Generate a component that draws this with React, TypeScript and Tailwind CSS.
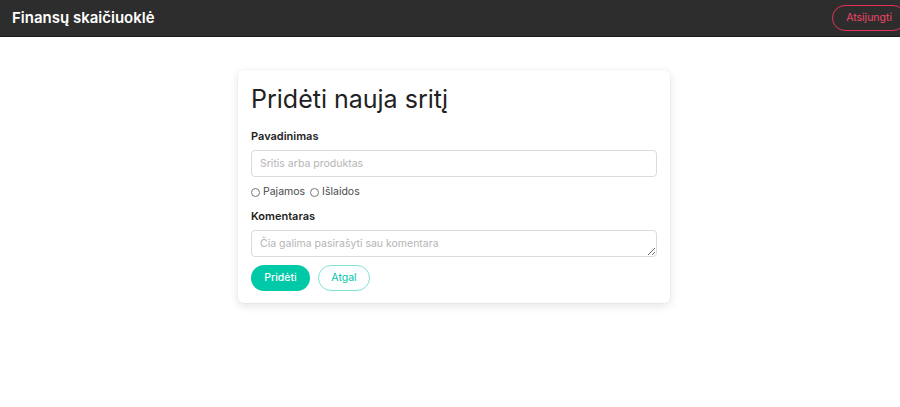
import React from "react";

export default function App() {
  return (
    <div className="min-h-[407px] w-full overflow-hidden bg-white" style={{ fontFamily: "Inter, 'Noto Sans', sans-serif" }}>
      <nav className="flex h-[37px] items-center overflow-hidden border-b border-[#1c1c1c] bg-[#2d2d2d] pl-[12px]">
        <div className="text-[15px] font-semibold text-white">Finansų skaičiuoklė</div>
        <div className="ml-auto flex -mr-[6px]">
          <button className="h-[26px] rounded-full border border-[#e8315a] px-[13px] text-[10.5px] text-[#f14668]">Atsijungti</button>
        </div>
      </nav>
      <div className="flex justify-center pt-[33px] pl-[8px]">
        <div className="w-[432px] rounded-[6px] bg-white px-[13px] pt-[13px] pb-[12px] shadow-[0_3px_10px_rgba(10,10,10,0.11),0_0_0_1px_rgba(10,10,10,0.02)]">
          <h1 className="text-[25px] leading-[32px] font-normal text-[#222]">Pridėti nauja sritį</h1>
          <div className="mt-[13px] text-[11px] font-semibold text-[#222] leading-[16px]">Pavadinimas</div>
          <input
            className="mt-[6px] block h-[27px] w-full rounded-[4px] border border-[#dbdbdb] px-[8px] text-[10.5px] text-[#222] placeholder:text-[#b5b5b5] outline-none"
            placeholder="Sritis arba produktas"
          />
          <div className="mt-[7px] flex items-center text-[10.5px] text-[#4a4a4a] leading-[16px]">
            <label className="flex items-center gap-[3px]">
              <span className="inline-block h-[9px] w-[9px] rounded-full border border-[#777]"></span>
              Pajamos
            </label>
            <label className="ml-[5px] flex items-center gap-[3px]">
              <span className="inline-block h-[9px] w-[9px] rounded-full border border-[#777]"></span>
              Išlaidos
            </label>
          </div>
          <div className="mt-[8px] text-[11px] font-semibold text-[#222] leading-[16px]">Komentaras</div>
          <textarea
            rows={1}
            className="mt-[6px] block h-[27px] w-full resize-y rounded-[4px] border border-[#dbdbdb] px-[8px] py-[5px] text-[10.5px] leading-[15px] text-[#222] placeholder:text-[#b5b5b5] outline-none"
            placeholder="Čia galima pasirašyti sau komentara"
          />
          <div className="mt-[8px] flex gap-[8px]">
            <button className="h-[26px] w-[59px] rounded-full bg-[#00c9a7] text-[10.5px] font-medium text-white">Pridėti</button>
            <button className="h-[26px] w-[52px] rounded-full border border-[#7fe3d4] bg-white text-[10.5px] text-[#00c4a7]">Atgal</button>
          </div>
        </div>
      </div>
    </div>
  );
}
